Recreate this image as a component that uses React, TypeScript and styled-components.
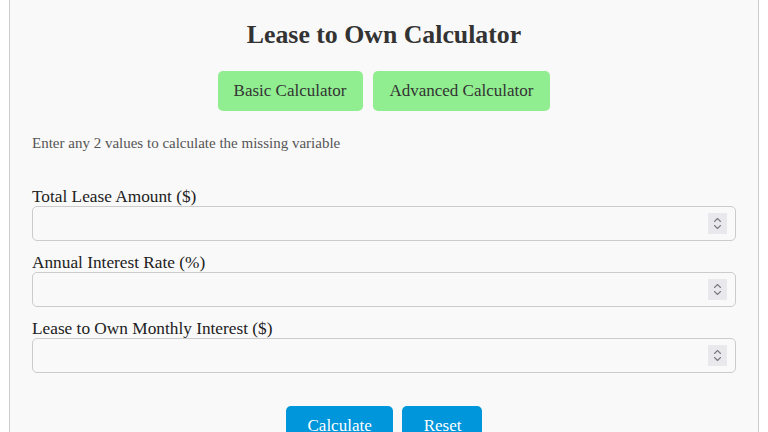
import React from "react";
import styled, { createGlobalStyle } from "styled-components";

const Global = createGlobalStyle`
  html, body { margin: 0; padding: 0; background: #ffffff; }
  body { font-family: "Liberation Serif", "Times New Roman", serif; }
  * { box-sizing: border-box; }
`;

const Container = styled.div`
  width: 750px;
  margin: 0 auto;
  background: #f9f9f9;
  border: 1px solid #cccccc;
  border-top: none;
  padding: 20px 22px 20px;
`;

const Title = styled.h1`
  margin: 0;
  text-align: center;
  font-size: 25.8px;
  font-weight: bold;
  color: #333333;
  line-height: 29px;
`;

const TabRow = styled.div`
  display: flex;
  justify-content: center;
  gap: 10px;
  margin-top: 22px;
`;

const TabButton = styled.button`
  background: #90ee90;
  color: #333333;
  border: none;
  border-radius: 5px;
  font-family: inherit;
  font-size: 17px;
  line-height: 18px;
  padding: 11px 17px 11px 16px;
  cursor: pointer;
`;

const Hint = styled.p`
  margin: 24px 0 0;
  font-size: 15px;
  line-height: 16px;
  color: #555555;
`;

const Form = styled.div`
  margin-top: 37px;
  display: flex;
  flex-direction: column;
  gap: 13px;
`;

const Field = styled.div`
  display: flex;
  flex-direction: column;
`;

const Label = styled.label`
  font-size: 17.3px;
  line-height: 18px;
  color: #222222;
`;

const InputWrap = styled.div`
  position: relative;
`;

const Input = styled.input`
  display: block;
  height: 35px;
  width: 100%;
  border: 1px solid #cccccc;
  border-radius: 5px;
  background: #f9f9f9;
  padding: 6px 8px;
  font-family: inherit;
  font-size: 16px;
  outline: none;
  -moz-appearance: textfield;

  &::-webkit-inner-spin-button,
  &::-webkit-outer-spin-button {
    -webkit-appearance: none;
    margin: 0;
  }
`;

const Spinner = styled.span`
  position: absolute;
  right: 9px;
  top: 7px;
  width: 19px;
  height: 21px;
  background: #e9e9ed;
  display: flex;
  align-items: center;
  justify-content: center;
  pointer-events: none;
`;

const Actions = styled.div`
  display: flex;
  justify-content: center;
  gap: 9px;
  margin-top: 33px;
`;

const ActionButton = styled.button`
  background: #0096db;
  color: #ffffff;
  border: none;
  border-radius: 5px;
  font-family: inherit;
  font-size: 17px;
  line-height: 18px;
  padding: 11px 21px 11px 22px;
  cursor: pointer;
`;

const fields = [
  "Total Lease Amount ($)",
  "Annual Interest Rate (%)",
  "Lease to Own Monthly Interest ($)",
];

function SpinIcon() {
  return (
    <svg width="19" height="21" viewBox="0 0 19 21" fill="none">
      <path
        d="M6.5 8.5 L9.5 5.5 L12.5 8.5"
        stroke="#7a7a80"
        strokeWidth="1.1"
        strokeLinecap="round"
        strokeLinejoin="round"
      />
      <path
        d="M6.5 12.5 L9.5 15.5 L12.5 12.5"
        stroke="#7a7a80"
        strokeWidth="1.1"
        strokeLinecap="round"
        strokeLinejoin="round"
      />
    </svg>
  );
}

export default function App() {
  return (
    <>
      <Global />
      <Container>
        <Title>Lease to Own Calculator</Title>
        <TabRow>
          <TabButton>Basic Calculator</TabButton>
          <TabButton>Advanced Calculator</TabButton>
        </TabRow>
        <Hint>Enter any 2 values to calculate the missing variable</Hint>
        <Form>
          {fields.map((f) => (
            <Field key={f}>
              <Label>{f}</Label>
              <InputWrap>
                <Input type="number" />
                <Spinner>
                  <SpinIcon />
                </Spinner>
              </InputWrap>
            </Field>
          ))}
        </Form>
        <Actions>
          <ActionButton>Calculate</ActionButton>
          <ActionButton>Reset</ActionButton>
        </Actions>
      </Container>
    </>
  );
}
